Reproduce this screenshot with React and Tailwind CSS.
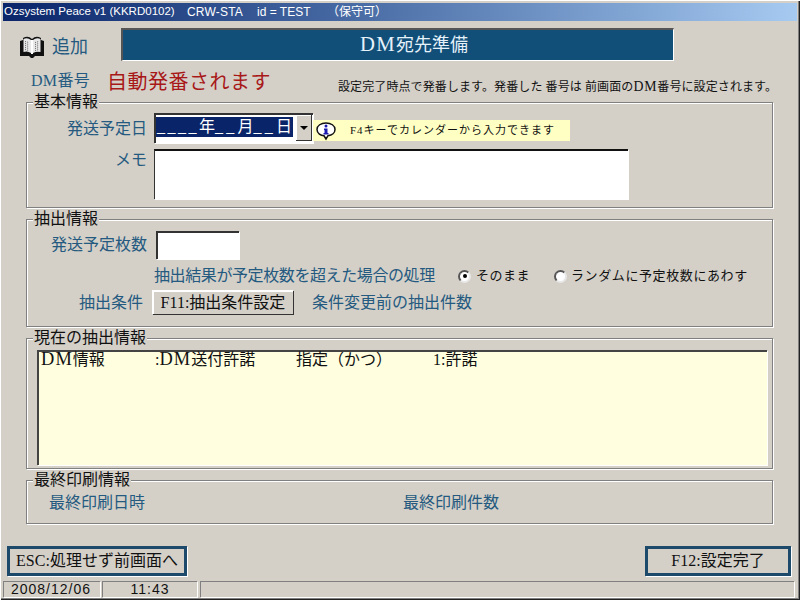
const font = { fontFamily: '"Liberation Serif","Noto Sans CJK JP",serif' };

function DM() {
  return <span className="text-[1.15em] leading-[0] tracking-[0.06em]">DM</span>;
}

function Group({ title, className, children }) {
  return (
    <fieldset className={`w-[747px] border border-[#808080] shadow-[1px_1px_0_#fff,inset_1px_1px_0_#fff] ${className}`}>
      <legend className="ml-[6px] px-[1px] h-[16px] text-[16px] leading-[16px] text-[#111] bg-[#d4d0c8]">{title}</legend>
      {children}
    </fieldset>
  );
}

function Label({ className, children }) {
  return <span className={`text-[16px] leading-[20px] text-[#255a80] whitespace-nowrap ${className}`}>{children}</span>;
}

function Radio({ checked }) {
  return (
    <span className="w-[13px] h-[13px] rounded-full bg-white border-[2px] border-t-[#555] border-l-[#555] border-b-[#e8e8e8] border-r-[#e8e8e8] flex items-center justify-center shrink-0">
      {checked && <span className="w-[4px] h-[4px] rounded-full bg-black" />}
    </span>
  );
}

function BookIcon() {
  return (
    <svg width="24" height="22" viewBox="0 0 24 22">
      <path d="M0 5l3-1V2q5-3 9 1 4-4 9-1v2l3 1v15h-9l-2 2h-2l-2-2H0z" fill="#111" />
      <path d="M3.500 3q4-2 7.500 1v13q-3.500-2.500-7.500-1z" fill="#e8e8e8" />
      <path d="M13 4q3.500-3 7.500-1v13q-4-1-7.500 1z" fill="#e8e8e8" />
      <path d="M11 4v14h2V4z" fill="#fff" />
      <path d="M5 5.500l4 1M5 7.500l4 1M5 9.500l4 1M5 11.500l4 1M5 13.500l4 1M15 6.500l4-1M15 8.500l4-1M15 10.500l4-1M15 12.500l4-1M15 14.500l4-1" stroke="#666" strokeWidth="1" strokeDasharray="1 1" />
    </svg>
  );
}

function InfoIcon() {
  return (
    <svg width="20" height="20" viewBox="0 0 20 20">
      <path d="M10 2C5 2 1 4.500 1 8.500s4 6 7 6.300L10 18l2-3.300c4-.5 7-3 7-6.200C19 4.500 15 2 10 2z" fill="#fff" stroke="#111" strokeWidth="1.500" />
      <circle cx="10" cy="5" r="1.500" fill="#1a1ab0" />
      <path d="M8 7.500h3.500V12h1v1.500h-5V12h1V9H8z" fill="#1a1ab0" />
    </svg>
  );
}

function FKey({ className, children }) {
  return (
    <button className={`h-[30px] border-[3px] border-[#1d4a6b] shadow-[1px_1px_0_#fff,-1px_-1px_0_#d4d0c8] bg-[#d4d0c8] text-[16px] leading-[24px] text-[#111] whitespace-nowrap ${className}`}>
      {children}
    </button>
  );
}

function Pane({ className, children }) {
  return (
    <div className={`h-[16px] border-t border-l border-[#808080] shadow-[1px_1px_0_#fff] text-[14px] leading-[15px] text-[#111] tracking-[1px] whitespace-nowrap ${className}`} style={{ fontFamily: '"Liberation Sans",sans-serif' }}>
      {children}
    </div>
  );
}

export default function App() {
  return (
    <div className="w-[800px] h-[600px] bg-[#d4d0c8] p-[3px] pb-0 overflow-hidden shadow-[inset_1px_1px_0_#fff,inset_-1px_-1px_0_#222,inset_-2px_-2px_0_#808080] flex flex-col" style={font}>
      <div className="h-[18px] shrink-0 bg-gradient-to-r from-[#0a246a] to-[#a6caf0] flex items-center pl-[1px] text-[12px] text-white whitespace-pre" style={{ fontFamily: '"Liberation Sans","Noto Sans CJK JP",sans-serif' }}>
        <span className="w-[183px] text-[11.500px]">Ozsystem Peace v1 (KKRD0102)</span>
        <span className="w-[70px] tracking-[0.2px]">CRW-STA</span>
        <span className="w-[70px]">id = TEST</span>
        <span>（保守可）</span>
      </div>

      <div className="h-[33px] mt-[7px] shrink-0 flex items-center">
        <div className="ml-[17px] mt-[5px] w-[24px] h-[22px] shrink-0"><BookIcon /></div>
        <span className="ml-[8px] mt-[5px] w-[69px] text-[18px] text-[#255a80]">追加</span>
        <div className="w-[553px] h-[33px] bg-[#114f78] border-t-[2px] border-l-[2px] border-t-[#555] border-l-[#555] border-b border-r border-b-white border-r-white flex items-center justify-center text-[18px] text-[#e6f2fa]">
          <span className="mt-[1px] ml-[32px]"><DM />宛先準備</span>
        </div>
      </div>

      <div className="h-[33px] shrink-0 flex items-start pt-[7px]">
        <span className="ml-[28px] w-[76px] mt-[1px] text-[16px] leading-[24px] text-[#255a80] tracking-[0.3px]">DM番号</span>
        <span className="w-[231px] text-[20px] leading-[28px] text-[#a81818] tracking-[0.5px]">自動発番されます</span>
        <span className="mt-[11px] text-[12px] leading-[16px] text-[#111] whitespace-nowrap tracking-[0.1px]">設定完了時点で発番します。発番した 番号は 前画面の<DM />番号に設定されます。</span>
      </div>

      <div className="ml-[23px] flex flex-col gap-[3px] shrink-0">
        <Group title="基本情報" className="h-[114px]">
          <div className="flex items-start pt-[3px]">
            <Label className="w-[120px] text-right mt-[6px]">発送予定日</Label>
            <div className="ml-[7px] w-[159px] h-[30px] bg-white border-t-[2px] border-l-[2px] border-t-[#333] border-l-[#333] shadow-[1px_1px_0_#fff] flex pt-[2px]">
              <div className="w-[137px] h-[20px] bg-[#0a246a] text-white text-[16px] leading-[20px] pl-[1px] whitespace-pre overflow-hidden">
                <span className="tracking-[2.500px]">____</span>年<span className="tracking-[3.250px]">__</span>月<span className="tracking-[3.250px]">__</span>日
              </div>
              <div className="ml-[3px] w-[16px] h-[26px] -mt-[2px] bg-[#d4d0c8] border-r border-b border-[#333] shadow-[inset_1px_1px_0_#fff] flex items-center justify-center">
                <span className="w-0 h-0 border-x-[4px] border-x-transparent border-t-[4px] border-t-black" />
              </div>
            </div>
            <div className="w-[257px] h-[21px] mt-[7px] bg-[#ffffc4] flex items-center pl-[3px] shrink-0">
              <div className="w-[20px] h-[20px] shrink-0"><InfoIcon /></div>
              <span className="ml-[14px] text-[11px] text-[#111] whitespace-nowrap tracking-[1px]">F4キーでカレンダーから入力できます</span>
            </div>
          </div>
          <div className="flex items-start mt-[6px]">
            <Label className="w-[120px] text-right mt-[1px]">メモ</Label>
            <div className="ml-[7px] w-[474px] h-[50px] bg-white border-t-[2px] border-l border-t-[#111] border-l-[#333] shadow-[1px_1px_0_#fff]" />
          </div>
        </Group>

        <Group title="抽出情報" className="h-[116px]">
          <div className="flex items-start pt-[4px]">
            <Label className="w-[120px] text-right mt-[4px]">発送予定枚数</Label>
            <div className="ml-[9px] w-[83px] h-[28px] bg-white border-t-[2px] border-l-[2px] border-t-[#333] border-l-[#333] shadow-[1px_1px_0_#fff]" />
          </div>
          <div className="flex items-center h-[20px] mt-[7px]">
            <Label className="ml-[127px] w-[304px] tracking-[-0.4px]">抽出結果が予定枚数を超えた場合の処理</Label>
            <Radio checked />
            <span className="ml-[5px] w-[78px] text-[13px] text-[#111] tracking-[0.5px]">そのまま</span>
            <Radio />
            <span className="ml-[4px] text-[13px] text-[#111] tracking-[0.6px] whitespace-nowrap">ランダムに予定枚数にあわす</span>
          </div>
          <div className="flex items-center h-[24px] mt-[5px]">
            <Label className="ml-[52px] w-[74px]">抽出条件</Label>
            <button className="w-[141px] h-[24px] bg-[#d4d0c8] border-r border-b border-[#333] shadow-[inset_1px_1px_0_#fff,-1px_-1px_0_#fff] text-[16px] leading-[20px] text-[#111] whitespace-nowrap">F11:抽出条件設定</button>
            <Label className="ml-[18px]">条件変更前の抽出件数</Label>
          </div>
        </Group>

        <Group title="現在の抽出情報" className="h-[139px]">
          <div className="ml-[10px] mt-[4px] w-[730px] h-[115px] bg-[#ffffe0] border-t-[2px] border-l-[2px] border-t-[#444] border-l-[#444] shadow-[1px_1px_0_#fff] flex items-start pl-[2px] text-[16px] leading-[16px] text-[#111] whitespace-nowrap">
            <span className="w-[114px]"><DM />情報</span>
            <span className="w-[141px]">:<DM />送付許諾</span>
            <span className="w-[137px]">指定（かつ）</span>
            <span>1:許諾</span>
          </div>
        </Group>

        <Group title="最終印刷情報" className="h-[52px]">
          <div className="flex items-center h-[26px] mt-[2px]">
            <Label className="ml-[22px] w-[354px]">最終印刷日時</Label>
            <Label>最終印刷件数</Label>
          </div>
        </Group>
      </div>

      <div className="mt-[22px] shrink-0 flex justify-between pl-[4px] pr-[6px]">
        <FKey className="w-[180px]">ESC:処理せず前画面へ</FKey>
        <FKey className="w-[146px]">F12:設定完了</FKey>
      </div>

      <div className="mt-[5px] shrink-0 flex">
        <Pane className="w-[97px] text-center pr-[2px]">2008/12/06</Pane>
        <Pane className="ml-[2px] w-[95px] text-center">11:43</Pane>
        <Pane className="ml-[3px] w-[594px]" />
      </div>
    </div>
  );
}
